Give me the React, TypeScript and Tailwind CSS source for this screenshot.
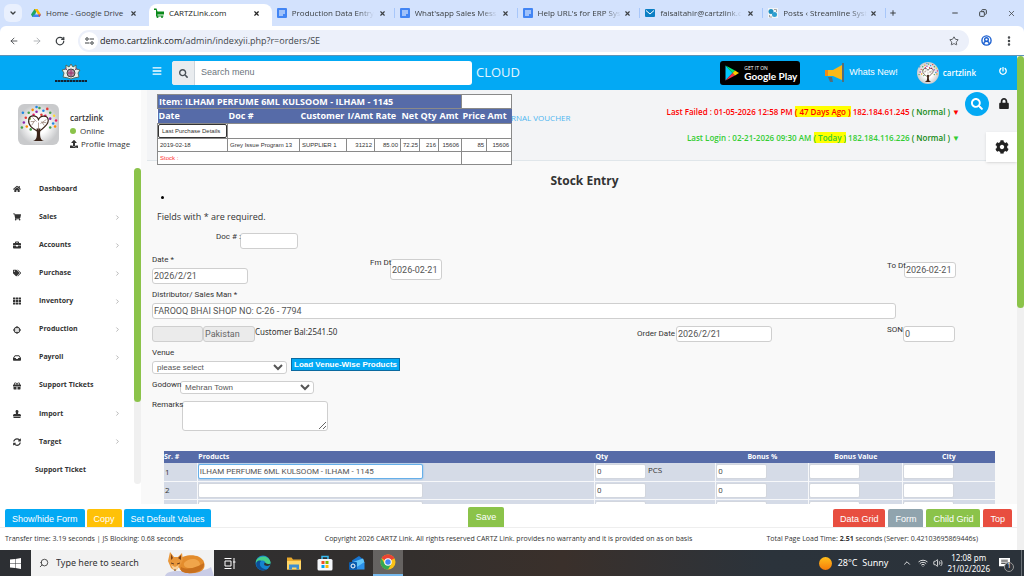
import React from 'react';
import { FaHome, FaShoppingCart, FaBriefcase, FaTags, FaTh, FaGift, FaLock, FaCog, FaSearch, FaPowerOff, FaUpload, FaSyncAlt, FaStamp, FaCrosshairs, FaInbox, FaBars } from 'react-icons/fa';
import { ArrowLeft, ArrowRight, RotateCw, ChevronDown, ChevronRight, ChevronUp, Star, CircleUserRound, EllipsisVertical, Plus, X, Minus, Copy, Search, Wifi, Volume2 } from 'lucide-react';

const FIELD = 'h-4 rounded-[3px] border border-[#cfcfcf] bg-white px-px font-["Roboto",sans-serif] text-[9px] text-[#555] outline-none';
const LABEL = 'relative font-["Roboto",sans-serif] text-[8px] leading-3 whitespace-nowrap text-[#333]';
const SELECT = 'block h-[13px] rounded-[3px] border border-[#cfcfcf] bg-white font-["Liberation_Sans",sans-serif] text-[8px] leading-[11px] text-[#555]';

const tabs = [
    { title: 'Home - Google Drive', icon: 'drive' },
    { title: 'CARTZLink.com', icon: 'cart', active: true },
    { title: 'Production Data Entry', icon: 'doc' },
    { title: "What'sapp Sales Mess", icon: 'doc' },
    { title: "Help URL's for ERP Sys", icon: 'doc' },
    { title: 'faisaltahir@cartzlink.c', icon: 'mail' },
    { title: 'Posts ‹ Streamline Syst', icon: 'posts' },
];

const menu = [
    { label: 'Dashboard', Icon: FaHome },
    { label: 'Sales', Icon: FaShoppingCart, sub: true },
    { label: 'Accounts', Icon: FaBriefcase, sub: true },
    { label: 'Purchase', Icon: FaTags, sub: true },
    { label: 'Inventory', Icon: FaTh, sub: true },
    { label: 'Production', Icon: FaCrosshairs, sub: true },
    { label: 'Payroll', Icon: FaInbox, sub: true },
    { label: 'Support Tickets', Icon: FaGift },
    { label: 'Import', Icon: FaStamp, sub: true },
    { label: 'Target', Icon: FaSyncAlt, sub: true },
];

const rows = [
    { sr: '1', product: 'ILHAM PERFUME 6ML KULSOOM - ILHAM - 1145', qty: '0', unit: 'PCS', bonus: '0' },
    { sr: '2', product: '', qty: '0', unit: '', bonus: '0' },
    { sr: '', product: '', qty: '', unit: '', bonus: '' },
];

function TabIcon({ name }: { name: string }) {
    return (
        <svg viewBox="0 0 20 20" className="h-[10px] w-[10px] shrink-0">
            {name === 'drive' && (
                <>
                    <path d="M7 2h6L6 18H3l-3-5z" fill="#1fa463" />
                    <path d="M7 2h6l7 11h-6z" fill="#ffba00" />
                    <path d="M6 13h14l-3 5H3z" fill="#4285f4" />
                    <path d="M14 13h6l-3 5z" fill="#ea4335" />
                </>
            )}
            {name === 'cart' && (
                <>
                    <path d="M0 1h5l2 6h13v6H7v2h12v2H4V4H0z" fill="#0a8a1b" />
                    <circle cx="7" cy="18" r="2" fill="#0a8a1b" />
                    <circle cx="16" cy="18" r="2" fill="#0a8a1b" />
                </>
            )}
            {name === 'doc' && (
                <>
                    <rect width="20" height="20" rx="2" fill="#4285f4" />
                    <path d="M4 6h12M4 10h12M4 14h8" stroke="#fff" strokeWidth="2" />
                </>
            )}
            {name === 'mail' && (
                <>
                    <rect y="2" width="20" height="16" rx="2" fill="#0b7fc4" />
                    <path d="M2 5l8 7 8-7" stroke="#fff" strokeWidth="2" fill="none" />
                </>
            )}
            {name === 'posts' && (
                <>
                    <rect width="20" height="20" fill="#f1f5f8" />
                    <circle cx="6" cy="7" r="5" fill="#1d8fc0" />
                    <circle cx="13" cy="13" r="5" fill="#2d9fd0" />
                    <path d="M12 3h5v5M3 14v4h5" stroke="#888" strokeWidth="1.5" fill="none" />
                </>
            )}
        </svg>
    );
}

function BrowserBar() {
    return (
        <header className="shrink-0 bg-[#d3e2fd] text-[#3c4043]">
            <div className="flex h-[26px] items-center">
                <button aria-label="Search tabs" className="ml-1 flex h-[18px] w-[18px] shrink-0 items-center justify-center rounded-md bg-[#e9f0fe]">
                    <ChevronDown className="h-2 w-2" strokeWidth={4} />
                </button>
                <div className="ml-1 grid h-full w-[84%] grid-cols-7">
                    {tabs.map((tab, i) => (
                        <div
                            key={tab.title}
                            className={`flex min-w-0 items-center self-end pl-[5px] ${tab.active ? 'h-[22px] rounded-t-lg bg-white pr-3 pb-1 text-[#222]' : 'h-[22px] pb-1'} ${i > 1 ? '' : 'pr-3'}`}
                        >
                            <TabIcon name={tab.icon} />
                            <span className={`ml-[5px] text-[8px] whitespace-nowrap ${i > 1 ? '[mask-image:linear-gradient(to_right,#000_80%,transparent)]' : ''}`}>{tab.title}</span>
                            <X className="ml-auto h-[7px] w-[7px] shrink-0" strokeWidth={4} />
                            {i > 1 && <i className="ml-2 h-[10px] w-px shrink-0 bg-[#a8c7fa]" />}
                        </div>
                    ))}
                </div>
                <Plus className="ml-[3px] h-2 w-2" strokeWidth={3} />
                <div className="mr-2 ml-auto flex items-center gap-5">
                    <Minus className="h-2 w-2" strokeWidth={3} />
                    <Copy className="h-2 w-2 -scale-x-100" strokeWidth={3} />
                    <X className="h-[9px] w-[9px]" strokeWidth={2} />
                </div>
            </div>
            <div className="flex h-[30px] items-center rounded-t-md border-b border-[#5d93b8] bg-white px-[9px]">
                <ArrowLeft className="h-[10px] w-[10px]" />
                <ArrowRight className="ml-[13px] h-[10px] w-[10px] text-[#a5a8ac]" />
                <RotateCw className="ml-[13px] h-[10px] w-[10px]" strokeWidth={3} />
                <div className="ml-[13px] flex h-[22px] flex-1 items-center rounded-full bg-[#ecf0fa] pr-[10px] pl-[2px]">
                    <span className="flex h-[18px] w-[18px] items-center justify-center rounded-full bg-white">
                        <svg viewBox="0 0 18 16" className="h-2 w-[9px]" stroke="currentColor" strokeWidth="2" fill="none">
                            <circle cx="4" cy="4" r="2.5" />
                            <circle cx="14" cy="12" r="2.5" />
                            <path d="M9 4h9M0 12h9" />
                        </svg>
                    </span>
                    <span className="ml-[2px] text-[9px] text-[#41464b]"><span className="text-[#1f1f1f]">demo.cartzlink.com</span>/admin/indexyii.php?r=orders/SE</span>
                    <Star className="ml-auto h-[10px] w-[10px]" />
                </div>
                <CircleUserRound className="ml-3 h-[11px] w-[11px] text-[#1a5fd0]" strokeWidth={3} />
                <EllipsisVertical className="ml-[11px] h-3 w-3" strokeWidth={3} />
            </div>
        </header>
    );
}

const leaves = [
    [8, 14, '#e53935'], [11, 9, '#43a047'], [15, 6, '#fb8c00'], [19, 8, '#8e24aa'], [22, 4, '#43a047'], [26, 7, '#1e88e5'],
    [30, 5, '#e53935'], [33, 9, '#43a047'], [37, 12, '#fdd835'], [39, 17, '#e91e63'], [36, 20, '#1e88e5'], [33, 24, '#43a047'],
    [6, 19, '#8e24aa'], [9, 23, '#fb8c00'], [13, 26, '#43a047'], [5, 9, '#1e88e5'], [12, 15, '#7cb342'], [28, 12, '#e91e63'],
    [38, 23, '#fb8c00'], [24, 11, '#e53935'], [4, 24, '#43a047'], [16, 11, '#e91e63'], [33, 15, '#8e24aa'], [19, 3, '#1e88e5'],
] as const;

function Tree({ className }: { className: string }) {
    return (
        <svg viewBox="0 0 42 42" className={className}>
            <defs>
                <radialGradient id="treeBg">
                    <stop offset="45%" stopColor="#fff" />
                    <stop offset="100%" stopColor="#c9cacc" />
                </radialGradient>
            </defs>
            <rect width="42" height="42" fill="url(#treeBg)" />
            {leaves.map(([x, y, fill]) => <circle key={`${x}-${y}`} cx={x} cy={y} r="1.3" fill={fill} />)}
            <path d="M15 38c4-1 5-4 4-13h4c-1 9 0 12 4 13z" fill="#3a2318" />
            <path d="M20 28C15 25 10 22 11 16c1-5 8-5 10 0 2-5 10-5 10 1 0 5-6 8-9 11" stroke="#3a2318" strokeWidth="1.2" fill="none" />
            <path d="M21 27v-8M14 22l3-5m10 5l-3-4M15 14l4 4m10-2l-6 4M13 18h4m8 1h4" stroke="#8a7466" strokeWidth=".7" fill="none" />
        </svg>
    );
}

function TopBar() {
    return (
        <div className="flex h-[34px] shrink-0 items-center bg-[#03a9f4] text-white">
            <div className="flex w-[141px] shrink-0 justify-center">
                <svg viewBox="0 0 34 20" className="h-5 w-[34px]">
                    <path d="M17 1l2 3 3-2v4l4 1-2 3 1 4-5 1-3 1-3-1-5-1 1-4-2-3 4-1V2l3 2z" fill="#e9efe9" stroke="#4f6d63" />
                    <circle cx="17" cy="10" r="4" fill="#ae8ba0" stroke="#444" />
                    <path d="M14 10h6M17 7v6M11 5l2 2m10-2l-2 2" stroke="#a0306a" />
                    <path d="M1 18h32" stroke="#123" strokeWidth="2" strokeDasharray="2 .5 3 .5" />
                </svg>
            </div>
            <button aria-label="Toggle menu" className="ml-[11px] pb-1"><FaBars className="h-[10px] w-[10px]" /></button>
            <div className="ml-[10px] flex h-6 w-[300px] overflow-hidden rounded-[3px] bg-white text-[#495057]">
                <label htmlFor="menu-search" className="flex w-[23px] items-center justify-center border-r border-[#ced4da] bg-[#e9ecef]"><FaSearch aria-label="Search" className="h-[9px] w-[9px]" /></label>
                <input id="menu-search" placeholder="Search menu" className="flex-1 px-[6px] font-['Liberation_Sans',sans-serif] text-[9px] outline-none placeholder:text-[#6c757d]" />
            </div>
            <span className="ml-1 text-[13px] text-[#e3f5fe]">CLOUD</span>
            <a href="#play" className="ml-auto flex h-6 w-20 shrink-0 items-center rounded-[3px] bg-black pl-[5px]">
                <svg viewBox="0 0 28 32" className="h-4 w-[14px] shrink-0">
                    <path d="M1 1v30l14-15z" fill="#00c8ff" />
                    <path d="M1 1l19 10-5 5z" fill="#00e676" />
                    <path d="M1 31l19-10-5-5z" fill="#f43249" />
                    <path d="M20 11l8 5-8 5-5-5z" fill="#ffc900" />
                </svg>
                <span className="ml-[5px] whitespace-nowrap">
                    <span className="block text-[5px] leading-[6px]">GET IT ON</span>
                    <span className="block font-['Lato',sans-serif] text-[10px] leading-[11px] font-bold">Google Play</span>
                </span>
            </a>
            <a href="#news" className="ml-6 flex shrink-0 items-center font-['Liberation_Sans',sans-serif] text-[9px]">
                <svg viewBox="0 0 22 20" className="mr-[3px] h-5 w-[22px]">
                    <path d="M4 14h4l1 5H6z" fill="#546e7a" />
                    <path d="M1 7h8l9-5v15l-9-4H1z" fill="#fbb917" />
                    <path d="M1 7h3v6H1z" fill="#f28c13" />
                    <path d="M18 0h2v19h-2z" fill="#546e7a" />
                </svg>
                Whats New!
            </a>
            <a href="#user" className="ml-[19px] flex shrink-0 items-center gap-1 text-[8px] font-semibold">
                <Tree className="h-[22px] w-[22px] rounded-full" />
                cartzlink
            </a>
            <button aria-label="Log out" className="mr-[10px] ml-[23px] pb-1"><FaPowerOff className="h-2 w-2" /></button>
        </div>
    );
}

function Sidebar() {
    return (
        <aside className="flex w-[141px] shrink-0 flex-col bg-white text-[#333]">
            <div className="flex h-[78px] shrink-0 pt-[14px] pl-[18px]">
                <Tree className="h-[41px] w-[41px] rounded-md" />
                <div className="ml-[11px] pt-[7px] text-[8px] leading-[13px] whitespace-nowrap">
                    <div className="font-semibold">cartzlink</div>
                    <div className="flex items-center"><i className="mr-1 h-[6px] w-[6px] rounded-full bg-[#8bc34a]" />Online</div>
                    <a href="#profile" className="flex items-center"><FaUpload className="mr-[3px] h-2 w-2" />Profile Image</a>
                </div>
            </div>
            <div className="flex min-h-0 flex-1 pb-5">
                <nav className="flex flex-1 flex-col pt-[7px] text-[7px] font-bold">
                    {menu.map(({ label, Icon, sub }) => (
                        <a key={label} href={`#${label}`} className="flex flex-1 items-center pr-[13px] pl-[13px]">
                            <Icon className="h-2 w-2" />
                            <span className="ml-[18px]">{label}</span>
                            {sub && <ChevronRight className="ml-auto h-[7px] w-[7px] text-[#888]" />}
                        </a>
                    ))}
                    <a href="#ticket" className="flex flex-1 items-center pl-[35px]">Support Ticket</a>
                </nav>
                <div className="w-[7px] rounded-full bg-[#f0f0f0]"><div className="h-[74%] rounded-full bg-[#8bc34a]" /></div>
            </div>
        </aside>
    );
}

function PurchaseHistory() {
    const cell = 'border border-[#8a8a8a] overflow-hidden px-[2px]';
    return (
        <table className="absolute top-1 left-4 z-10 w-[354px] table-fixed border-collapse bg-white font-['Liberation_Sans',sans-serif] text-[6px] whitespace-nowrap text-[#333]">
            <colgroup>
                {[70, 72, 47, 28, 26, 19, 19, 23, 25, 25].map((w, i) => <col key={i} style={{ width: w }} />)}
            </colgroup>
            <thead className="text-left font-['Open_Sans',sans-serif] text-[9px] leading-[10px] text-white">
                <tr className="h-[14px]">
                    <th colSpan={8} className="border border-[#8a8a8a] bg-[#566ba8] px-px">Item: ILHAM PERFUME 6ML KULSOOM - ILHAM - 1145</th>
                    <th colSpan={2} className="border border-[#8a8a8a] bg-white" />
                </tr>
                <tr className="h-[15px] bg-[#566ba8]">
                    {['Date', 'Doc #', 'Customer', 'I/Amt', 'Rate', 'Net', 'Qty', 'Amt', 'Price', 'Amt'].map((h, i) => <th key={i} className="pl-px">{h}</th>)}
                </tr>
            </thead>
            <tbody>
                <tr className="h-[14px]">
                    <td className="border border-[#8a8a8a]"><button className="block h-[14px] w-full rounded-[2px] border border-[#333] bg-white px-[3px] text-left text-[6px]">Last Purchase Details</button></td>
                    <td colSpan={9} className={cell} />
                </tr>
                <tr className="h-[13px]">
                    {['2019-02-18', 'Grey Issue Program 13', 'SUPPLIER 1', '31212', '85.00', '72.25', '216', '15606', '85', '15606'].map((v, i) => (
                        <td key={i} className={`${cell} ${i > 2 ? 'text-right' : ''}`}>{v}</td>
                    ))}
                </tr>
                <tr className="h-[13px]">
                    <td colSpan={8} className={`${cell} text-[#f33]`}>Stock :</td>
                    <td colSpan={2} className={cell} />
                </tr>
            </tbody>
        </table>
    );
}

function LoginInfo() {
    return (
        <div className="mr-[57px] text-right text-[8px] font-semibold whitespace-nowrap">
            <p className="mt-4 h-[26px] leading-3 text-[#f00]">
                Last Failed : 01-05-2026 12:58 PM <mark className="bg-[#ff0] text-inherit">( 47 Days Ago )</mark> 182.184.61.245 <span className="text-[#128a12]">( Normal )</span> ▼
            </p>
            <p className="leading-3 text-[#32cd32]">
                Last Login : 02-21-2026 09:30 AM <mark className="bg-[#ff0] text-inherit">( Today )</mark> 182.184.116.226 <span className="text-[#128a12]">( Normal )</span> ▼
            </p>
        </div>
    );
}

function StockForm() {
    return (
        <form className="pl-[11px] font-['Liberation_Sans',sans-serif]">
            <h1 className="mt-2 text-center font-['Open_Sans',sans-serif] text-[12px] leading-6 font-bold text-[#333]">Stock Entry</h1>
            <ul className="h-[10px] list-disc pl-[22px] text-[10px] leading-[10px]"><li /></ul>
            <p className="mt-2 pl-[5px] font-['Open_Sans',sans-serif] text-[9px] leading-3 text-[#333]">Fields with * are required.</p>

            <div className="mt-[10px] ml-16 flex items-start">
                <label htmlFor="doc" className={`${LABEL} w-6 leading-[8px]`}>Doc # :</label>
                <input id="doc" className={`${FIELD} w-[58px]`} />
            </div>

            <div className="mt-[5px] grid h-[30px] grid-cols-[218fr_517fr_130fr]">
                <div>
                    <label htmlFor="date" className={`${LABEL} mb-[2px] block`}>Date *</label>
                    <input id="date" defaultValue="2026/2/21" className={`${FIELD} block w-24`} />
                </div>
                <div className="flex items-start pt-[5px]">
                    <label htmlFor="fm" className={`${LABEL} w-5 leading-[8px]`}>Fm Dt</label>
                    <input id="fm" defaultValue="2026-02-21" className="h-[21px] w-[52px] rounded-[3px] border border-[#cfcfcf] bg-white px-px font-['Roboto',sans-serif] text-[9px] text-[#555] outline-none" />
                </div>
                <div className="flex items-start pt-2">
                    <label htmlFor="to" className={`${LABEL} w-[17px] leading-[8px]`}>To Dt</label>
                    <input id="to" defaultValue="2026-02-21" className={`${FIELD} w-[52px]`} />
                </div>
            </div>

            <label htmlFor="distributor" className={`${LABEL} mt-[5px] mb-[2px] block`}>Distributor/ Sales Man *</label>
            <input id="distributor" defaultValue="FAROOQ BHAI SHOP NO: C-26 - 7794" className={`${FIELD} block w-[86%]`} />

            <div className="mt-[7px] grid grid-cols-[485fr_250fr_130fr]">
                <div className="flex">
                    <input aria-label="City" disabled className="h-4 w-[51px] rounded-[3px] border border-[#cfcfcf] bg-[#ebebeb]" />
                    <input aria-label="Country" disabled defaultValue="Pakistan" className="h-4 w-[52px] rounded-[3px] border border-[#cfcfcf] bg-[#ebebeb] px-px font-['Roboto',sans-serif] text-[9px] text-[#666]" />
                    <span className="font-['Noto_Sans',sans-serif] text-[8px] leading-3 text-[#333]">Customer Bal:2541.50</span>
                </div>
                <div className="flex items-center">
                    <label htmlFor="order-date" className={`${LABEL} w-[39px]`}>Order Date</label>
                    <input id="order-date" defaultValue="2026/2/21" className={`${FIELD} w-24`} />
                </div>
                <div className="flex items-start">
                    <label htmlFor="son" className={`${LABEL} w-4 leading-[8px]`}>SON</label>
                    <input id="son" defaultValue="0" className={`${FIELD} w-[52px]`} />
                </div>
            </div>

            <div className="mt-[5px] flex items-start">
                <div>
                    <label htmlFor="venue" className={`${LABEL} mb-[2px] block`}>Venue</label>
                    <select id="venue" className={`${SELECT} w-[135px]`}>
                        <option>please select</option>
                    </select>
                </div>
                <button type="button" className="mt-[11px] ml-1 h-[13px] border border-[#0b6aa0] bg-[#03a9f4] px-[2px] text-[8px] leading-[11px] font-bold text-white">Load Venue-Wise Products</button>
            </div>
            <div className="mt-[7px] flex items-start">
                <label htmlFor="godown" className={`${LABEL} w-7 leading-[8px]`}>Godown</label>
                <select id="godown" className={`${SELECT} w-[134px]`}>
                    <option>Mehran Town</option>
                </select>
            </div>
            <div className="mt-[7px] flex items-start">
                <label htmlFor="remarks" className={`${LABEL} w-[30px] leading-[8px]`}>Remarks</label>
                <textarea id="remarks" className="block h-[30px] w-[146px] rounded-[3px] border border-[#cfcfcf] bg-white text-[9px]" />
            </div>
        </form>
    );
}

function ProductGrid() {
    const cell = 'border-b border-l border-white/80 p-0 align-middle';
    const box = 'block h-[15px] w-[51px] rounded-[2px] border border-[#d2d6de] bg-white px-px font-["Roboto",sans-serif] text-[8px] text-[#555]';
    return (
        <div className="mt-5 mr-[22px] ml-[23px]">
            <table className="w-full table-fixed text-[8px] text-[#333]">
                <colgroup>
                    <col className="w-[4%]" />
                    <col className="w-[47.8%]" />
                    <col className="w-[14.6%]" />
                    <col className="w-[11.2%]" />
                    <col className="w-[11.3%]" />
                    <col className="w-[11.1%]" />
                </colgroup>
                <thead className="bg-[#566ba8] text-[7px] leading-[12px] text-white">
                    <tr>
                        <th className="text-left">Sr. #</th>
                        <th className="pl-px text-left">Products</th>
                        <th className="pl-px text-left">Qty</th>
                        <th>Bonus %</th>
                        <th>Bonus Value</th>
                        <th>City</th>
                    </tr>
                </thead>
                <tbody className="bg-[#d5dbe7]">
                    {rows.map((r, i) => (
                        <tr key={i} className="h-[18px]">
                            <td className="border-b border-white/80 pl-px">{r.sr}</td>
                            <td className={cell}>
                                <input aria-label={`Product ${i + 1}`} defaultValue={r.product} className={`block h-[15px] w-[225px] rounded-[2px] border bg-white px-px font-["Roboto",sans-serif] text-[8px] text-[#555] ${r.product ? 'border-[#66afe9] shadow-[0_0_2px_#66afe9]' : 'border-[#d2d6de]'}`} />
                            </td>
                            <td className={cell}>
                                <div className="flex">
                                    <input aria-label={`Qty ${i + 1}`} defaultValue={r.qty} className={box} />
                                    <span className="ml-[2px]">{r.unit}</span>
                                </div>
                            </td>
                            <td className={cell}><input aria-label={`Bonus % ${i + 1}`} defaultValue={r.bonus} className={box} /></td>
                            <td className={cell}><input aria-label={`Bonus value ${i + 1}`} className={box} /></td>
                            <td className={cell}><input aria-label={`City ${i + 1}`} className={box} /></td>
                        </tr>
                    ))}
                </tbody>
            </table>
        </div>
    );
}

function Actions() {
    const btn = 'h-[18px] rounded-t-[2px] px-[7px] pt-[3px] text-[9px] text-white whitespace-nowrap';
    return (
        <div className="grid h-6 shrink-0 grid-cols-[1fr_auto_1fr] items-end border-b border-[#eee] bg-white px-[5px] font-['Liberation_Sans',sans-serif]">
            <div className="flex gap-[2px]">
                <button className={`${btn} bg-[#03a9f4]`}>Show/hide Form</button>
                <button className={`${btn} bg-[#ffc107]`}>Copy</button>
                <button className={`${btn} bg-[#03a9f4]`}>Set Default Values</button>
            </div>
            <button className="mr-[45px] h-5 rounded-t-[2px] bg-[#8bc34a] px-2 pt-px text-[9px] text-white">Save</button>
            <div className="flex justify-end gap-[3px]">
                <button className={`${btn} bg-[#e84e40]`}>Data Grid</button>
                <button className={`${btn} bg-[#90a4ae]`}>Form</button>
                <button className={`${btn} bg-[#8bc34a]`}>Child Grid</button>
                <button className={`${btn} bg-[#e84e40]`}>Top</button>
            </div>
        </div>
    );
}

function Taskbar() {
    return (
        <div className="flex h-[26px] shrink-0 items-center bg-[linear-gradient(90deg,#2c2f33,#332f2d_40%,#3a302b_55%,#2b333b_75%,#2b323a)] font-['Noto_Sans',sans-serif] text-white">
            <button aria-label="Start" className="flex w-[31px] shrink-0 justify-center">
                <svg viewBox="0 0 22 22" className="h-[11px] w-[11px]" fill="#fff"><path d="M0 3l10-1v8H0zM11 2l11-2v10H11zM0 11h10v9L0 19zM11 11h11v11l-11-2z" /></svg>
            </button>
            <label className="flex h-full w-[183px] shrink-0 items-center bg-[#f2f2f2] pl-2 text-[#333]">
                <Search className="h-[10px] w-[10px] shrink-0 -scale-x-100" />
                <input aria-label="Search" placeholder="Type here to search" className="ml-[7px] w-[106px] text-[9px] outline-none placeholder:text-[#333]" />
                <svg viewBox="0 0 52 26" className="h-[26px] w-[52px] shrink-0">
                    <path d="M3 26c2-5 8-5 18-5 12 0 24 0 28-4l3 9z" fill="#c9cce6" />
                    <path d="M16 10c6-6 22-7 26 2 3 9-6 12-16 11-8-1-10-5-10-13z" fill="#e38c2c" />
                    <path d="M22 13c5-6 15-5 16 1 0 4-6 5-10 4-4 0-7-2-6-5z" fill="#f0a54b" />
                    <path d="M19 17c8 4 18-1 23-4 1 7-8 11-18 10-5-1-6-3-5-6z" fill="#c8701e" />
                    <path d="M8 2l4 5h4l4-4 1 7-3 6-5 5-4-3-3-7z" fill="#e9973a" />
                    <path d="M9 4l2 4-2 2zM19 5l-3 3 3 2z" fill="#7a3f16" />
                    <path d="M9 15l4 2 4-2-2 5-2 1-2-2z" fill="#f8cf97" />
                    <path d="M9 13l3 1m3 0l3-1M12 20h2" stroke="#4a2a18" strokeWidth=".8" />
                </svg>
            </label>
            <svg viewBox="0 0 24 22" className="ml-[10px] h-[11px] w-3" stroke="#fff" strokeWidth="2" fill="none">
                <path d="M1 1h14M1 21h14M2 6h12v10H2zM20 0v22M18 8h5" />
            </svg>
            <svg viewBox="0 0 32 32" className="ml-[19px] h-4 w-4">
                <circle cx="16" cy="16" r="15" fill="#1583cf" />
                <path d="M2 12C6 2 26-2 31 14c1 6-5 8-10 7 2-7-2-11-8-10-5 0-9 2-11 5z" fill="#45cf8a" />
                <path d="M12 12c-6 6 0 18 12 16-12 7-24-2-21-13 2-4 6-5 9-3z" fill="#0c4f96" />
                <path d="M20 21c-3-1-1-4-1-6 5 1 4 5 12 2-1 5-7 6-11 4z" fill="#2e2f32" />
            </svg>
            <svg viewBox="0 0 28 26" className="ml-[16px] h-[13px] w-[14px]">
                <path d="M0 1h9l3 4h16v20H0z" fill="#e9a92c" />
                <path d="M0 8h28v17H0z" fill="#ffd667" />
                <path d="M4 15h20v10h-5v-4h-9v4H4z" fill="#3f8dcf" />
            </svg>
            <svg viewBox="0 0 32 32" className="ml-4 h-4 w-4">
                <path d="M10 8V3h12v5" stroke="#38bdf2" strokeWidth="3" fill="none" />
                <rect x="1" y="8" width="30" height="23" rx="3" fill="#f5f7fa" />
                <path d="M9 12h6v6H9z" fill="#f25022" /><path d="M17 12h6v6h-6z" fill="#7fba00" />
                <path d="M9 20h6v6H9z" fill="#00a4ef" /><path d="M17 20h6v6h-6z" fill="#ffb900" />
            </svg>
            <svg viewBox="0 0 32 32" className="ml-4 h-4 w-4">
                <path d="M6 11L20 2l10 8v18H8z" fill="#1876d2" />
                <path d="M8 14l20-7 3 8-14 11z" fill="#61c5fa" />
                <path d="M31 14v15H8z" fill="#2b91ea" />
                <rect y="14" width="16" height="16" rx="2" fill="#0b5cad" />
                <circle cx="8" cy="22" r="4" fill="none" stroke="#fff" strokeWidth="2" />
            </svg>
            <div className="ml-2 flex h-full w-[30px] items-center justify-center border-b-2 border-[#76b9ed] bg-white/25">
                <svg viewBox="0 0 32 32" className="h-4 w-4">
                    <circle cx="16" cy="16" r="15" fill="#fbc116" />
                    <path d="M16 16L3 8.500A15 15 0 0 1 29 8.500z" fill="#ea4335" />
                    <path d="M3 8.500A15 15 0 0 0 16 31l6.500-11L9.500 20z" fill="#34a853" />
                    <circle cx="16" cy="16" r="7.500" fill="#fff" /><circle cx="16" cy="16" r="5.500" fill="#4285f4" />
                </svg>
            </div>
            <i className="ml-auto h-[13px] w-[13px] rounded-full bg-linear-to-b from-[#ffbf1b] to-[#f47b0a]" />
            <span className="ml-[6px] text-[9px] whitespace-pre">28°C  Sunny</span>
            <ChevronUp className="ml-[14px] h-[10px] w-[10px]" />
            <Wifi className="ml-[6px] h-[10px] w-[10px]" />
            <Volume2 className="ml-[5px] h-[10px] w-[10px]" />
            <div className="ml-[4px] text-center text-[8px] leading-[11px]">12:08 pm<br />21/02/2026</div>
            <div className="relative ml-[9px] w-[15px]">
                <svg viewBox="0 0 20 20" className="h-[11px] w-[11px]"><path d="M0 0h20v15h-6v5l-5-5H0z" fill="#fff" /><path d="M4 4h12M4 7h12M4 10h8" stroke="#333" strokeWidth="1.500" /></svg>
                <span className="absolute top-[4px] left-[5px] flex h-[10px] w-[10px] items-center justify-center rounded-full border border-[#999] bg-[#2f353b] text-[7px]">1</span>
            </div>
            <i className="mr-[2px] ml-[7px] h-full w-px bg-[#6b7177]" />
        </div>
    );
}

export default function App() {
    return (
        <div className="flex h-screen flex-col overflow-hidden bg-white font-['Open_Sans',sans-serif]">
            <BrowserBar />
            <div className="flex min-h-0 flex-1">
                <div className="flex min-w-0 flex-1 flex-col">
                    <TopBar />
                    <div className="flex min-h-0 flex-1">
                        <Sidebar />
                        <main className="relative min-w-0 flex-1 overflow-hidden bg-[#f9f9f9]">
                            <PurchaseHistory />
                            <div className="ml-[6px] flex h-[71px] justify-between border-b border-[#e0e6ea] bg-[#f3f4f6]">
                                <a href="#voucher" className="ml-[364px] pt-[22px] text-[8px] leading-3 whitespace-nowrap text-[#4db5f0]">RNAL VOUCHER</a>
                                <LoginInfo />
                            </div>
                            <button aria-label="Search" className="absolute top-[2px] right-7 flex h-6 w-6 items-center justify-center rounded-full bg-[#03a9f4] text-white"><FaSearch className="h-3 w-3" /></button>
                            <FaLock className="absolute top-2 right-2 h-[11px] w-[10px] text-[#222]" />
                            <button aria-label="Settings" className="absolute top-[42px] right-0 flex h-[30px] w-[31px] items-center justify-center bg-white text-[#222] shadow"><FaCog className="h-[14px] w-[14px]" /></button>
                            <StockForm />
                            <ProductGrid />
                        </main>
                    </div>
                    <Actions />
                    <footer className="grid h-[22px] shrink-0 grid-cols-[1fr_auto_1fr] items-center bg-white px-[5px] text-[7px] whitespace-nowrap text-[#333]">
                        <span>Transfer time: 3.19 seconds | JS Blocking: 0.68 seconds</span>
                        <span>Copyright 2026 CARTZ Link. All rights reserved CARTZ Link. provides no warranty and it is provided on as on basis</span>
                        <span className="pr-[34px] text-right">Total Page Load Time: <b>2.51</b> seconds (Server: 0.42103695869446s)</span>
                    </footer>
                </div>
                <div className="w-[7px] shrink-0 bg-[#f0f0f0]"><div className="h-[51%] rounded-full bg-[#8bc34a]" /></div>
            </div>
            <Taskbar />
        </div>
    );
}
